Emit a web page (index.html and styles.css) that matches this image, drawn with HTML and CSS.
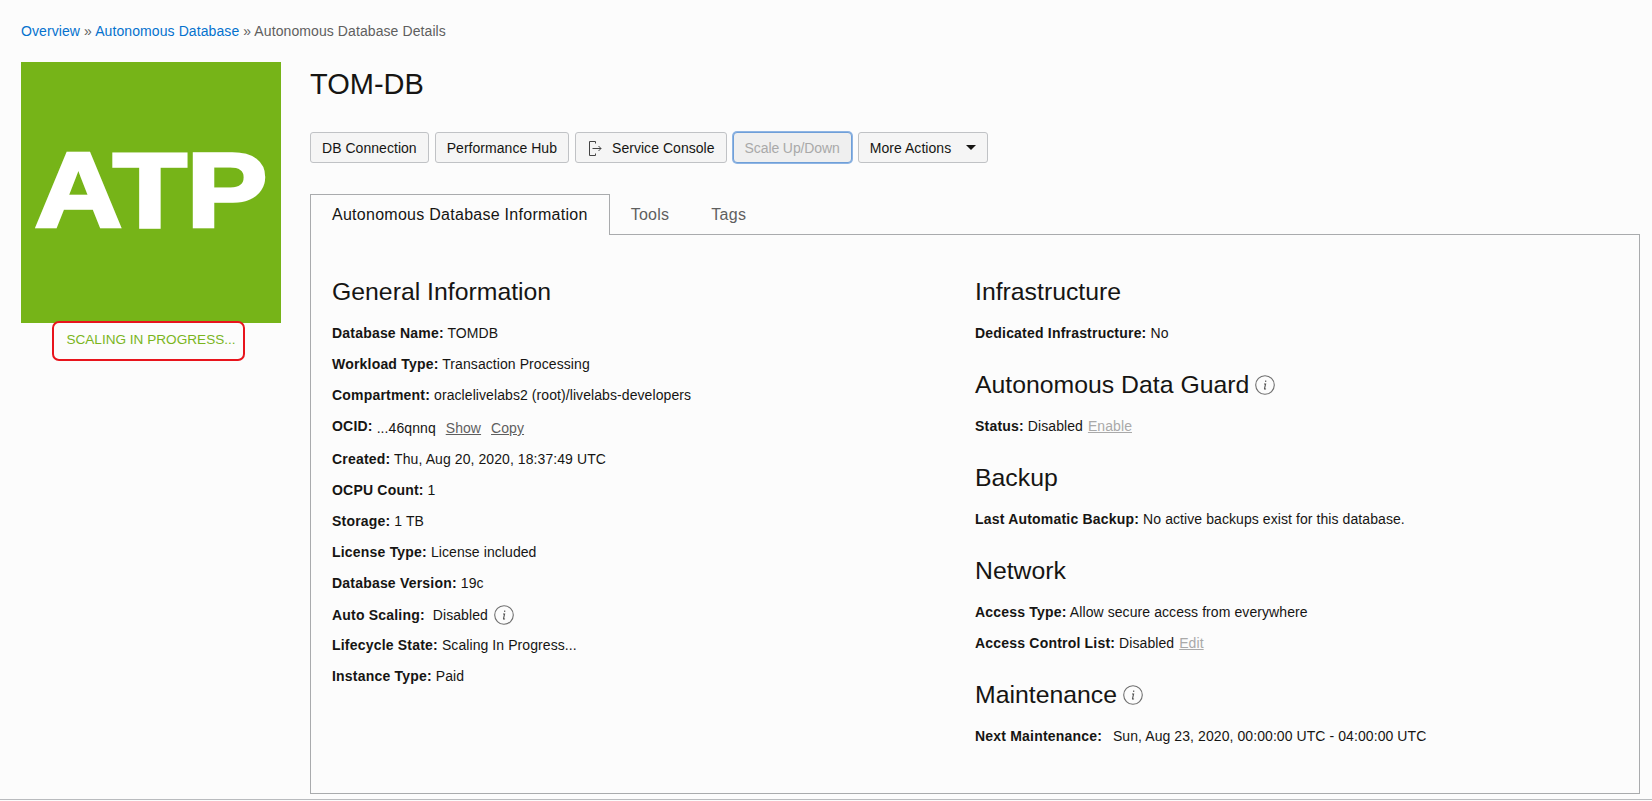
FILE: index.html
```html
<!DOCTYPE html>
<html lang="en">
<head>
<meta charset="utf-8">
<title>Autonomous Database Details</title>
<link rel="stylesheet" href="styles.css">
</head>
<body>
<nav class="crumbs"><a href="#">Overview</a> » <a href="#">Autonomous Database</a> » Autonomous Database Details</nav>
<div class="page">
  <aside class="side">
    <div class="tile"><span class="tile-text">ATP</span></div>
    <div class="state">SCALING IN PROGRESS...<span class="callout"></span></div>
  </aside>
  <main class="content">
    <h1 class="title">TOM-DB</h1>
    <div class="actions">
      <button class="btn">DB Connection</button>
      <button class="btn">Performance Hub</button>
      <button class="btn"><svg class="exit" width="18" height="18" viewBox="0 0 18 18"><path d="M8.5 2.5H2.5V16.5H8.5M8.5 2.5V4.5M8.5 14.5V16.5M5.5 9.5H14M11.5 7L14 9.5L11.5 12" fill="none" stroke="#444" stroke-width="1"/></svg>Service Console</button>
      <button class="btn btn-focus">Scale Up/Down</button>
      <button class="btn">More Actions<span class="caret"></span></button>
    </div>
    <div class="tabs">
      <span class="tab tab-on">Autonomous Database Information</span>
      <span class="tab">Tools</span>
      <span class="tab">Tags</span>
    </div>
    <section class="panel">
      <div class="col">
        <h2 class="head">General Information</h2>
        <p class="row"><b>Database Name:</b> TOMDB</p>
        <p class="row"><b>Workload Type:</b> Transaction Processing</p>
        <p class="row"><b>Compartment:</b> oraclelivelabs2 (root)/livelabs-developers</p>
        <p class="row row-ocid"><b>OCID:</b> ...46qnnq <a class="link" href="#">Show</a> <a class="link" href="#">Copy</a></p>
        <p class="row"><b>Created:</b> Thu, Aug 20, 2020, 18:37:49 UTC</p>
        <p class="row"><b>OCPU Count:</b> 1</p>
        <p class="row"><b>Storage:</b> 1 TB</p>
        <p class="row"><b>License Type:</b> License included</p>
        <p class="row"><b>Database Version:</b> 19c</p>
        <p class="row"><b>Auto Scaling:</b>&nbsp; Disabled <svg class="info" width="20" height="20" viewBox="0 0 20 20"><circle cx="10" cy="10" r="9.3" fill="none" stroke="#6f6f6f" stroke-width="1.1"/><path d="M10.7 5.4v1.5M9 9h1.6l-1.1 4.6c-.1.7.6.8 1.4.1" fill="none" stroke="#555" stroke-width="1.1"/></svg></p>
        <p class="row"><b>Lifecycle State:</b> Scaling In Progress...</p>
        <p class="row"><b>Instance Type:</b> Paid</p>
      </div>
      <div class="col">
        <h2 class="head">Infrastructure</h2>
        <p class="row"><b>Dedicated Infrastructure:</b> No</p>
        <h2 class="head head-next">Autonomous Data Guard <svg class="info" width="20" height="20" viewBox="0 0 20 20"><circle cx="10" cy="10" r="9.3" fill="none" stroke="#6f6f6f" stroke-width="1.1"/><path d="M10.7 5.4v1.5M9 9h1.6l-1.1 4.6c-.1.7.6.8 1.4.1" fill="none" stroke="#555" stroke-width="1.1"/></svg></h2>
        <p class="row"><b>Status:</b> Disabled <a class="link link-off" href="#">Enable</a></p>
        <h2 class="head head-next">Backup</h2>
        <p class="row"><b>Last Automatic Backup:</b> No active backups exist for this database.</p>
        <h2 class="head head-next">Network</h2>
        <p class="row"><b>Access Type:</b> Allow secure access from everywhere</p>
        <p class="row"><b>Access Control List:</b> Disabled <a class="link link-off" href="#">Edit</a></p>
        <h2 class="head head-next">Maintenance <svg class="info" width="20" height="20" viewBox="0 0 20 20"><circle cx="10" cy="10" r="9.3" fill="none" stroke="#6f6f6f" stroke-width="1.1"/><path d="M10.7 5.4v1.5M9 9h1.6l-1.1 4.6c-.1.7.6.8 1.4.1" fill="none" stroke="#555" stroke-width="1.1"/></svg></h2>
        <p class="row"><b>Next Maintenance:</b>&nbsp;&thinsp; Sun, Aug 23, 2020, 00:00:00 UTC - 04:00:00 UTC</p>
      </div>
    </section>
  </main>
</div>
<div class="rule"></div>
```

FILE: styles.css
```css
* { box-sizing: border-box; }
html, body { height: 100%; }
body {
  margin: 0;
  padding: 22px 12px 0 21px;
  background: #fcfcfc;
  color: #161513;
  font-family: "Liberation Sans", Arial, sans-serif;
  font-size: 14px;
  line-height: 18px;
  overflow: hidden;
  position: relative;
}
a { text-decoration: none; }
.crumbs { color: #5f5f5f; height: 18px; letter-spacing: .09px; }
.crumbs a { color: #0572ce; }
.page { display: flex; margin-top: 22px; gap: 29px; }
.side { width: 260px; flex: none; }
.tile {
  width: 260px;
  height: 261px;
  background: #76b418;
  display: flex;
  justify-content: center;
  align-items: flex-start;
}
.tile-text {
  margin-top: 68px;
  color: #fff;
  font-weight: 700;
  font-size: 106px;
  line-height: 120px;
  -webkit-text-stroke: 3.5px #fff;
  transform: scaleX(1.14);
}
.state {
  position: relative;
  text-align: center;
  color: #7ab51d;
  margin-top: 8px;
  font-size: 13.6px;
}
.callout {
  position: absolute;
  left: 31px;
  top: -10px;
  width: 193px;
  height: 40px;
  border: 2px solid #e8141c;
  border-radius: 7px;
}
.content { flex: 1; min-width: 0; }
.title {
  margin: 0;
  font-size: 29px;
  font-weight: 400;
  line-height: 36px;
  padding-top: 4px;
}
.actions { display: flex; gap: 6px; margin-top: 30px; align-items: center; }
.btn {
  height: 31px;
  padding: 0 11px;
  background: #f5f5f5;
  border: 1px solid #c0c2c5;
  border-radius: 3px;
  color: #161513;
  font: inherit;
  letter-spacing: .04px;
  display: inline-flex;
  align-items: center;
}
.btn-focus {
  color: #a9a9a9;
  background: #efefef;
  border-color: #6f9fd8;
  box-shadow: 0 0 0 1px #8fb5e4;
  border-radius: 4px;
  letter-spacing: -.1px;
  padding: 0 11px;
}
.exit { margin-right: 7px; }
.caret {
  margin-left: 15px;
  border-style: solid;
  border-width: 5px 5px 0;
  border-color: #161513 transparent transparent;
}
.tabs { display: flex; margin-top: 31px; height: 41px; position: relative; z-index: 1; }
.tab {
  font-size: 16px;
  letter-spacing: .27px;
  line-height: 39px;
  padding: 0 20px;
  color: #5f5f5f;
  border: 1px solid transparent;
  border-bottom: 0;
}
.tab-on {
  color: #161513;
  background: #fcfcfc;
  border-color: #a9abad;
  padding: 0 21px;
  line-height: 40px;
}
.panel {
  margin-top: -1px;
  height: 560px;
  border: 1px solid #a9abad;
  padding: 43px 21px 0;
  display: grid;
  grid-template-columns: 643px 1fr;
  gap: 0 0;
}
.head {
  margin: 0 0 18px;
  font-size: 24.8px;
  font-weight: 400;
  line-height: 28px;
  display: flex;
  align-items: center;
  gap: 6px;
  height: 28px;
}
.head-next { margin-top: 29px; margin-bottom: 18px; }
.head .info { margin-left: 0; }
.row { margin: 0 0 13px; height: 18px; display: block; letter-spacing: .08px; }
.row b { letter-spacing: .2px; }
.row-ocid { margin-top: 15px; }
.row-ocid b { position: relative; top: -2px; }
.link { color: #5f5f5f; text-decoration: underline; margin-left: 6px; }
.link-off { color: #a9a9a9; margin-left: 1px; }
.info { vertical-align: -5px; margin-left: 2px; }
.rule {
  position: absolute;
  left: 0;
  right: 0;
  top: 799px;
  height: 1px;
  background: #b9bbbe;
}
```
